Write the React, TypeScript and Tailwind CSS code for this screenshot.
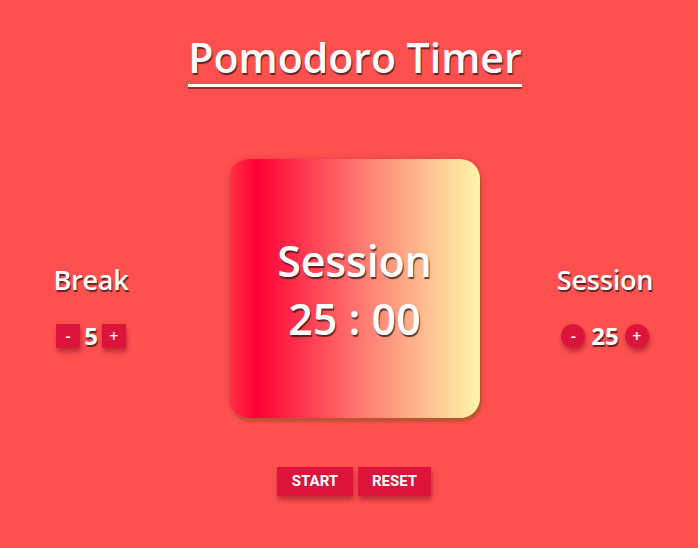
const ts = '[text-shadow:1px_2px_1px_rgba(40,20,20,0.75)]';

const SquareBtn = ({ label, round = false }: { label: string; round?: boolean }) => (
  <button
    className={
      'flex h-6 w-6 items-center justify-center bg-[#dc143c] text-[16px] font-semibold text-white shadow-[1px_4px_5px_rgba(120,0,20,0.45)] ' +
      (round ? 'rounded-full' : 'rounded-[1px]')
    }
  >
    {label}
  </button>
);

const Control = ({ title, value, round = false }: { title: string; value: number; round?: boolean }) => (
  <div className="flex flex-col items-center">
    <h2 className={`text-[27px] font-semibold leading-[30px] tracking-[-0.2px] text-white ${ts}`}>{title}</h2>
    <div className={'mt-[29px] flex items-center ' + (round ? 'gap-[6px]' : 'gap-1')}>
      <SquareBtn label="-" round={round} />
      <span className={`text-[24px] font-bold leading-[24px] text-white ${ts}`}>{value}</span>
      <SquareBtn label="+" round={round} />
    </div>
  </div>
);

export default function App() {
  return (
    <div
      className="flex h-[548px] w-[698px] flex-col items-center bg-[#ff5050] pt-[32px]"
      style={{ fontFamily: '"Open Sans", "Liberation Sans", sans-serif' }}
    >
      <h1
        className={`ml-[12px] border-b-[3px] border-white pb-[2px] text-[41px] font-semibold leading-[50px] tracking-[0px] text-white shadow-[0_2px_0_rgba(90,20,20,0.6)] ${ts}`}
      >
        Pomodoro Timer
      </h1>

      <div className="mt-[72px] flex w-full items-start">
        <div className="mt-[106px] flex w-[182px] justify-center">
          <Control title="Break" value={5} />
        </div>
        <div className="ml-[47px] flex h-[259px] w-[251px] flex-col items-center justify-center rounded-[20px] bg-[linear-gradient(90deg,#ff3344_0%,#ff0033_11%,#ff2a48_25%,#ff6c6a_48%,#ffad88_72%,#fff6aa_100%)] pt-[2px] shadow-[2px_4px_2px_rgba(150,90,30,0.55),0_0_6px_rgba(120,0,0,0.2)]">
          <div className={`text-[43px] font-semibold leading-[54px] tracking-[-0.2px] text-white ${ts}`}>Session</div>
          <div className={`mt-[4px] text-[43px] font-semibold leading-[54px] text-white ${ts}`}>25 : 00</div>
        </div>
        <div className="ml-[50px] mt-[106px] flex w-[150px] justify-center">
          <Control title="Session" value={25} round />
        </div>
      </div>

      <div className="mt-[49px] ml-[10px] flex gap-[5px]" style={{ fontFamily: 'Roboto, "Liberation Sans", sans-serif' }}>
        <button className="h-[29px] w-[76px] bg-[#dc143c] text-[15px] font-bold text-white shadow-[1px_4px_5px_rgba(120,0,20,0.45)]">
          START
        </button>
        <button className="h-[29px] w-[73px] bg-[#dc143c] text-[15px] font-bold text-white shadow-[1px_4px_5px_rgba(120,0,20,0.45)]">
          RESET
        </button>
      </div>
    </div>
  );
}
